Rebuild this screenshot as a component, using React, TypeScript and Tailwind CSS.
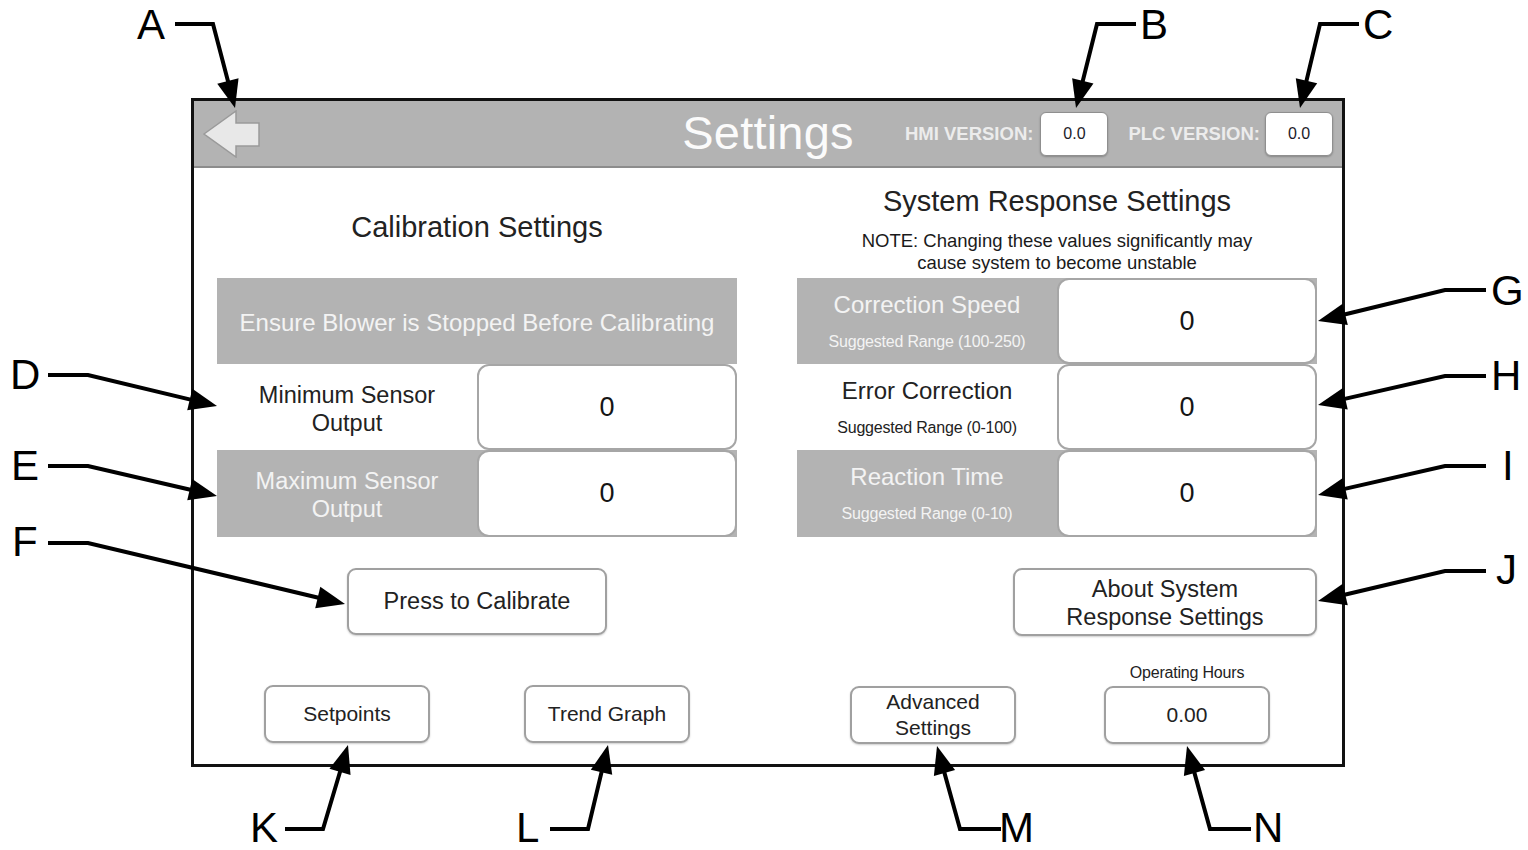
import React from "react";

type Pt = [number, number];

const callouts: { letter: string; cls: string; a: Pt; b: Pt; tip: Pt }[] = [
  { letter: "A", cls: "left-[137px] top-[7px]", a: [175, 24], b: [213, 24], tip: [235, 108] },
  { letter: "B", cls: "left-[1140px] top-[7px]", a: [1136, 24], b: [1097, 24], tip: [1076, 108] },
  { letter: "C", cls: "left-[1363px] top-[7px]", a: [1359, 24], b: [1320, 24], tip: [1300, 108] },
  { letter: "D", cls: "left-[10px] top-[357px]", a: [48, 375], b: [88, 375], tip: [217, 406] },
  { letter: "E", cls: "left-[11px] top-[448px]", a: [48, 466], b: [88, 466], tip: [217, 496] },
  { letter: "F", cls: "left-[12px] top-[524px]", a: [48, 543], b: [88, 543], tip: [345, 604] },
  { letter: "G", cls: "left-[1491px] top-[273px]", a: [1486, 290], b: [1445, 290], tip: [1318, 321] },
  { letter: "H", cls: "left-[1491px] top-[358px]", a: [1486, 376], b: [1445, 376], tip: [1318, 405] },
  { letter: "I", cls: "left-[1502px] top-[448px]", a: [1486, 466], b: [1445, 466], tip: [1318, 495] },
  { letter: "J", cls: "left-[1496px] top-[552px]", a: [1486, 571], b: [1445, 571], tip: [1318, 601] },
  { letter: "K", cls: "left-[250px] top-[810px]", a: [285, 829], b: [323, 829], tip: [348, 745] },
  { letter: "L", cls: "left-[516px] top-[810px]", a: [550, 829], b: [588, 829], tip: [608, 745] },
  { letter: "M", cls: "left-[999px] top-[810px]", a: [1001, 829], b: [960, 829], tip: [937, 746] },
  { letter: "N", cls: "left-[1253px] top-[810px]", a: [1251, 829], b: [1210, 829], tip: [1187, 746] },
];

function arrowGeom(p: Pt, t: Pt) {
  const dx = t[0] - p[0];
  const dy = t[1] - p[1];
  const len = Math.hypot(dx, dy);
  const ux = dx / len;
  const uy = dy / len;
  const L = 28;
  const W = 11;
  const bx = t[0] - ux * L;
  const by = t[1] - uy * L;
  const poly = `${t[0]},${t[1]} ${bx - uy * W},${by + ux * W} ${bx + uy * W},${by - ux * W}`;
  return { poly, ex: bx + ux * 4, ey: by + uy * 4 };
}

function BackArrow() {
  return (
    <svg width="58" height="48" viewBox="0 0 58 48" className="block">
      <polygon
        points="1,24 33,1 33,13 56,13 56,36 33,36 33,47"
        fill="#e8e8e8"
        stroke="#9a9a9a"
        strokeWidth="1.5"
        strokeLinejoin="miter"
      />
    </svg>
  );
}

function VersionBox({ value }: { value: string }) {
  return (
    <div className="w-[68px] h-[44px] bg-white rounded-[6px] border-[1.5px] border-[#8f8f8f] shadow-[0_1px_2px_rgba(0,0,0,0.25)] flex items-center justify-center text-[16px] text-[#1c1c2a]">
      {value}
    </div>
  );
}

function InputBox({ value }: { value: string }) {
  return (
    <div className="w-[260px] h-full bg-white rounded-[12px] border-2 border-[#a6a6a6] flex items-center justify-center text-[27px] text-[#151515]">
      {value}
    </div>
  );
}

function RespRow({ gray, title, sub, h }: { gray: boolean; title: string; sub: string; h: string }) {
  return (
    <div className={`flex ${h} ${gray ? "bg-[#b3b3b3]" : "bg-white"}`}>
      <div className="w-[260px] flex flex-col items-center justify-center gap-[13px]">
        <div className={`text-[24px] leading-[28px] ${gray ? "text-[#f3f3f3]" : "text-[#222]"}`}>{title}</div>
        <div className={`text-[16px] leading-[20px] tracking-[-0.2px] ${gray ? "text-[#f3f3f3]" : "text-[#222]"}`}>{sub}</div>
      </div>
      <InputBox value="0" />
    </div>
  );
}

function Btn({ children, cls }: { children: React.ReactNode; cls: string }) {
  return (
    <div
      className={`bg-white rounded-[9px] border-2 border-[#a0a0a0] shadow-[0_1px_2px_rgba(0,0,0,0.2)] flex items-center justify-center text-center text-[#222] ${cls}`}
    >
      {children}
    </div>
  );
}

export default function App() {
  return (
    <div className="relative w-[1528px] h-[850px] bg-white overflow-hidden font-['Liberation_Sans',Arial,sans-serif]">
      <div className="pt-[98px] pl-[191px]">
        <div className="w-[1154px] h-[669px] border-[3px] border-[#111] bg-white flex flex-col">
          {/* Header */}
          <div className="h-[67px] bg-[#b3b3b3] border-b-2 border-[#8c8c8c] grid grid-cols-[1fr_auto_1fr] items-center">
            <div className="pl-[9px] pt-[1px]">
              <BackArrow />
            </div>
            <div className="text-[47px] leading-[56px] text-[#fbfbfb] tracking-[0.2px] pb-[1px]">Settings</div>
            <div className="flex items-center justify-end pr-[9px]">
              <span className="text-[18.5px] font-bold text-[#ececec] mr-[7px]">HMI VERSION:</span>
              <VersionBox value="0.0" />
              <span className="text-[18.5px] font-bold text-[#ececec] ml-[20px] mr-[5px]">PLC VERSION:</span>
              <VersionBox value="0.0" />
            </div>
          </div>

          {/* Body */}
          <div className="flex pl-[23px] gap-[60px]">
            {/* Left column */}
            <div className="w-[520px] flex flex-col">
              <div className="h-[110px] flex items-center justify-center pt-[10px] text-[29px] text-[#222]">
                Calibration Settings
              </div>
              <div className="h-[86px] bg-[#b3b3b3] flex items-center justify-center pt-[3px] text-[24px] text-[#f3f3f3]">
                Ensure Blower is Stopped Before Calibrating
              </div>
              <div className="h-[86px] flex bg-white">
                <div className="w-[260px] flex items-center justify-center pt-[3px] text-center text-[23.5px] leading-[28px] text-[#222]">
                  Minimum Sensor
                  <br />
                  Output
                </div>
                <InputBox value="0" />
              </div>
              <div className="h-[87px] flex bg-[#b3b3b3]">
                <div className="w-[260px] flex items-center justify-center pt-[3px] text-center text-[23.5px] leading-[28px] text-[#f3f3f3]">
                  Maximum Sensor
                  <br />
                  Output
                </div>
                <InputBox value="0" />
              </div>
              <div className="mt-[31px] flex justify-center">
                <Btn cls="w-[260px] h-[67px] text-[23.5px]">Press to Calibrate</Btn>
              </div>
              <div className="mt-[30px] grid grid-cols-2">
                <div className="flex flex-col items-center">
                  <div className="h-[20px]" />
                  <Btn cls="w-[166px] h-[58px] text-[21px]">Setpoints</Btn>
                </div>
                <div className="flex flex-col items-center">
                  <div className="h-[20px]" />
                  <Btn cls="w-[166px] h-[58px] text-[21px]">Trend Graph</Btn>
                </div>
              </div>
            </div>

            {/* Right column */}
            <div className="w-[520px] flex flex-col">
              <div className="h-[110px] flex flex-col items-center pt-[16px]">
                <div className="text-[29px] leading-[34px] text-[#222]">System Response Settings</div>
                <div className="mt-[12px] text-[18.5px] leading-[22px] text-[#1a1a1a] text-center">
                  NOTE: Changing these values significantly may
                  <br />
                  cause system to become unstable
                </div>
              </div>
              <RespRow gray title="Correction Speed" sub="Suggested Range (100-250)" h="h-[86px]" />
              <RespRow gray={false} title="Error Correction" sub="Suggested Range (0-100)" h="h-[86px]" />
              <RespRow gray title="Reaction Time" sub="Suggested Range (0-10)" h="h-[87px]" />
              <div className="mt-[31px] flex justify-end">
                <Btn cls="w-[304px] h-[68px] text-[23.5px] leading-[28px] pt-[2px]">
                  About System
                  <br />
                  Response Settings
                </Btn>
              </div>
              <div className="mt-[29px] grid grid-cols-2">
                <div className="flex flex-col items-center pl-[12px]">
                  <div className="h-[21px]" />
                  <Btn cls="w-[166px] h-[58px] text-[21px] leading-[26px]">
                    Advanced
                    <br />
                    Settings
                  </Btn>
                </div>
                <div className="flex flex-col items-center">
                  <div className="h-[21px] pt-[1px] text-[16px] leading-[14px] text-[#222] tracking-[-0.2px]">Operating Hours</div>
                  <Btn cls="w-[166px] h-[58px] text-[21px]">0.00</Btn>
                </div>
              </div>
            </div>
          </div>
        </div>
      </div>

      {/* Callout arrows */}
      <svg className="absolute left-0 top-0 pointer-events-none" width="1528" height="850" viewBox="0 0 1528 850">
        {callouts.map((c) => {
          const g = arrowGeom(c.b, c.tip);
          return (
            <g key={c.letter}>
              <polyline
                points={`${c.a[0]},${c.a[1]} ${c.b[0]},${c.b[1]} ${g.ex},${g.ey}`}
                fill="none"
                stroke="#000"
                strokeWidth="4"
                strokeLinejoin="miter"
              />
              <polygon points={g.poly} fill="#000" />
            </g>
          );
        })}
      </svg>

      {/* Callout letters */}
      {callouts.map((c) => (
        <div key={c.letter} className={`absolute text-[42px] leading-[36px] text-black ${c.cls}`}>
          {c.letter}
        </div>
      ))}
    </div>
  );
}
